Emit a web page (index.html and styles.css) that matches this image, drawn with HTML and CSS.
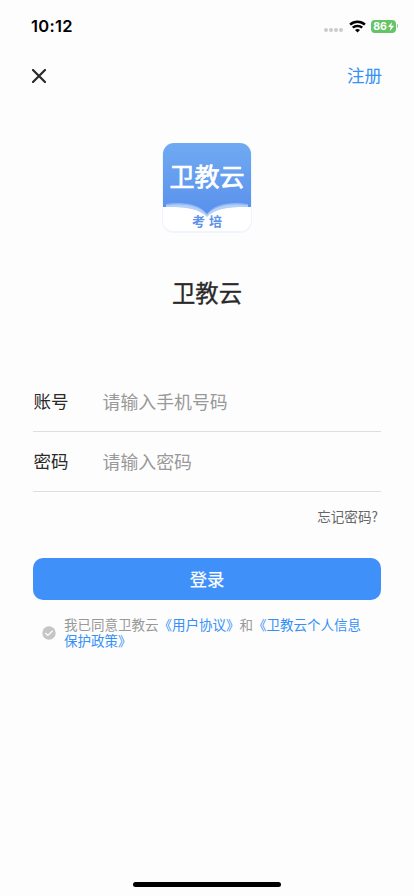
FILE: index.html
```html
<!DOCTYPE html>
<html lang="zh-CN">
<head>
<meta charset="utf-8">
<meta name="viewport" content="width=device-width, initial-scale=1">
<title>登录</title>
<link rel="stylesheet" href="styles.css">
</head>
<body>
<div class="screen">
  <header class="status">
    <span class="time">10:12</span>
    <div class="indicators">
      <span class="signal"><i></i><i></i><i></i><i></i></span>
      <svg class="wifi" width="17" height="13" viewBox="0 0 17 13" fill="none" stroke="#000" stroke-width="2.5">
        <path d="M1.100 4.700C5.200.8 11.800.8 15.900 4.700"/>
        <path d="M3.800 7.700c2.600-2.400 6.800-2.400 9.400 0"/>
        <path d="M8.500 12.400 6 9.900c1.400-1.300 3.600-1.300 5 0z" fill="#000" stroke="none"/>
      </svg>
      <span class="battery"><span>86</span><svg width="6" height="9" viewBox="0 0 6 9"><path d="M3.800 0 0 5h2.600L2 9l4-5.200H3.300z" fill="#fff"/></svg></span><span class="cap"></span>
    </div>
  </header>
  <nav class="nav">
    <svg width="14" height="14" viewBox="0 0 14 14"><path d="M1 1l12 12M13 1L1 13" stroke="#292929" stroke-width="2.200" stroke-linecap="round"/></svg>
    <a class="register">注册</a>
  </nav>
  <main class="content">
    <svg class="logo" width="98" height="98" viewBox="0 0 98 98">
      <defs>
        <linearGradient id="sky" x1="0" y1="0" x2="0" y2="1"><stop offset="0" stop-color="#70aaf2"/><stop offset="1" stop-color="#588fec"/></linearGradient>
        <clipPath id="tile"><rect x="5" y="5" width="88" height="88" rx="11"/></clipPath>
      </defs>
      <rect x="4" y="5" width="90" height="90" rx="12" fill="#f0f4fc"/>
      <g clip-path="url(#tile)">
        <rect x="5" y="5" width="88" height="88" fill="#fff"/>
        <path d="M5 5h88v76H5z" fill="url(#sky)"/>
        <path d="M8 66c17-3 34 0 41 10 7-10 24-13 41-10v5l-41 9-41-9z" fill="#8fb7f4"/>
        <path d="M8 67.500c17-2.500 34 0 41 9.500 7-9.500 24-12 41-9.500v4l-41 8-41-8z" fill="#b4cff8"/>
        <path d="M5 69c19-.5 36 1 44 10 8-9 25-10.500 44-10v24H5z" fill="#fff"/>
      </g>
      <text class="logo-name" x="49" y="48" text-anchor="middle" textLength="75">卫教云</text>
      <text class="logo-sub" x="34" y="88">考</text>
      <text class="logo-sub" x="51" y="88">培</text>
    </svg>
    <h1 class="title">卫教云</h1>
    <form class="form">
      <label class="field"><span class="label">账号</span><span class="hint">请输入手机号码</span></label>
      <label class="field"><span class="label">密码</span><span class="hint">请输入密码</span></label>
      <a class="forgot">忘记密码?</a>
      <button class="submit" type="button">登录</button>
      <div class="agree">
        <svg width="14" height="14" viewBox="0 0 14 14"><circle cx="7" cy="7" r="6.700" fill="#c5c5c5"/><path d="M3.300 7l2.500 2.500L10.700 4.700" fill="none" stroke="#fff" stroke-width="1.200"/></svg>
        <p>我已同意卫教云<a>《用户协议》</a>和<a>《卫教云个人信息<br>保护政策》</a></p>
      </div>
    </form>
  </main>
  <div class="home"></div>
</div>
</body>
</html>
```
FILE: styles.css
```css
* { box-sizing: border-box; }
body {
  margin: 0;
  background: #fdfdfd;
  font-family: "Noto Sans CJK SC", sans-serif;
  color: #292929;
}
.screen {
  width: 414px;
  height: 896px;
  display: flex;
  flex-direction: column;
  overflow: hidden;
}
.status {
  height: 52px;
  padding: 0 16px 0 31px;
  display: flex;
  align-items: center;
  justify-content: space-between;
}
.time {
  font: 600 16.5px/20px Inter, sans-serif;
  letter-spacing: 0.3px;
  color: #000;
}
.indicators { display: flex; align-items: center; }
.signal { display: flex; gap: 1px; margin: 8px 6px 0 0; }
.signal i { width: 4px; height: 4px; border-radius: 50%; background: #cbcbcb; }
.wifi { margin-right: 5px; }
.battery {
  width: 25px;
  height: 13px;
  border-radius: 4px;
  background: #64c466;
  display: flex;
  align-items: center;
  justify-content: center;
  gap: 1px;
  color: #fff;
  font: 700 10.5px/13px Inter, sans-serif;
}
.cap { width: 1px; height: 4px; margin-left: 1px; background: #8fd190; border-radius: 0 1px 1px 0; }
.nav {
  height: 46px;
  padding: 0 32px;
  display: flex;
  align-items: center;
  justify-content: space-between;
}
.nav svg { margin-top: 1px; }
.register { font-size: 17.5px; line-height: 24px; color: #3590f7; }
.content {
  flex: 1;
  display: flex;
  flex-direction: column;
  align-items: center;
  padding: 40px 33px 0;
}
.logo { flex: none; }
.logo-name { font-size: 25px; font-weight: 400; fill: #fff; stroke: #fff; stroke-width: 0.7px; }
.logo-sub { font-size: 13px; font-weight: 700; fill: #5c91ec; }
.title {
  margin: 39px 0 0;
  font-size: 23.3px;
  line-height: 34px;
  font-weight: 400;
  -webkit-text-stroke: 0.3px #292929;
}
.form { width: 100%; margin-top: 63px; display: flex; flex-direction: column; }
.field {
  height: 60px;
  padding-bottom: 1px;
  display: flex;
  align-items: center;
  border-bottom: 1px solid #dedede;
}
.label { width: 69.5px; padding-left: 0.5px; font-size: 17.5px; line-height: 24px; }
.hint { font-size: 17.9px; color: #999; }
.forgot { align-self: flex-end; margin: 14px 3px 0 0; font-size: 13.6px; line-height: 20px; color: #666; }
.submit {
  height: 42px;
  margin-top: 32px;
  padding: 0;
  border: 0;
  border-radius: 10px;
  background: #4090fa;
  color: #fff;
  font: 400 17.3px/42px "Noto Sans CJK SC", sans-serif;
  -webkit-text-stroke: 0.2px #fff;
}
.agree { display: flex; align-items: center; gap: 8px; margin-top: 16px; padding-left: 9px; }
.agree svg { flex: none; margin-top: 2px; }
.agree p { margin: 0; font-size: 13.5px; line-height: 16px; color: #999; white-space: nowrap; }
.agree a { color: #3590f7; }
.home { width: 148px; height: 5px; margin: 0 auto 9px; border-radius: 3px; background: #000; }
```
